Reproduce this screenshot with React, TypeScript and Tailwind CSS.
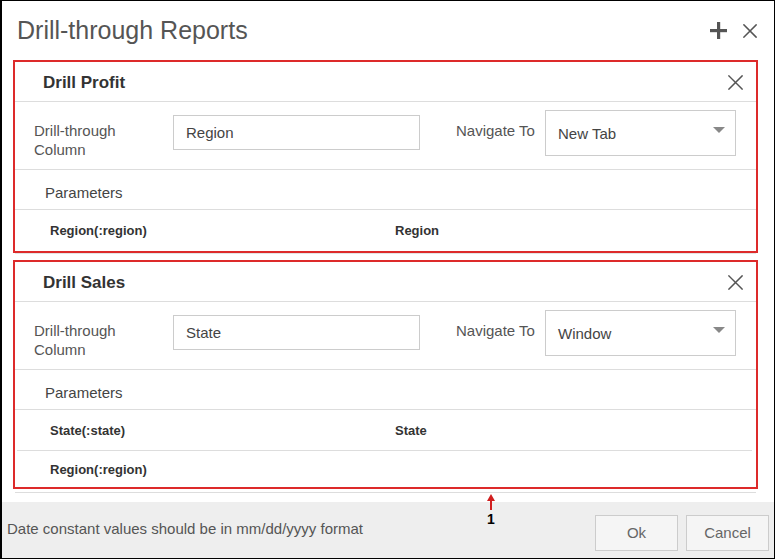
import React from 'react';

interface Param {
  name: string;
  value: string;
}

interface DrillSection {
  title: string;
  column: string;
  navigate: string;
  params: Param[];
}

const sections: DrillSection[] = [
  {
    title: 'Drill Profit',
    column: 'Region',
    navigate: 'New Tab',
    params: [{ name: 'Region(:region)', value: 'Region' }],
  },
  {
    title: 'Drill Sales',
    column: 'State',
    navigate: 'Window',
    params: [
      { name: 'State(:state)', value: 'State' },
      { name: 'Region(:region)', value: '' },
    ],
  },
];

function CloseIcon({ size = 15, stroke = 1.6 }: { size?: number; stroke?: number }) {
  return (
    <svg width={size} height={size} viewBox="0 0 16 16" fill="none">
      <path d="M1 1L15 15M15 1L1 15" stroke="#555" strokeWidth={stroke} strokeLinecap="square" />
    </svg>
  );
}

function PlusIcon() {
  return (
    <svg width="17" height="17" viewBox="0 0 17 17">
      <rect x="7" y="0" width="3.2" height="17" fill="#555" />
      <rect x="0" y="7" width="17" height="3.2" fill="#555" />
    </svg>
  );
}

function Section({ section, lastRowHeight }: { section: DrillSection; lastRowHeight: string }) {
  return (
    <div className="border-2 border-[#dd2a2a]">
      {/* header */}
      <div className="flex h-[40px] items-center justify-between border-b border-[#dddddd] pl-[28px] pr-[13px] pt-[2px]">
        <span className="text-[17px] font-bold text-[#333]">{section.title}</span>
        <CloseIcon />
      </div>

      {/* column + navigate */}
      <div className="flex h-[68px] border-b border-[#dddddd] pl-[19px] pt-[8px]">
        <div className="w-[139px] pt-[11px] text-[15px] leading-[19px] text-[#555]">
          Drill-through
          <br />
          Column
        </div>
        <div className="mt-[5px] flex h-[35px] w-[247px] items-center border border-[#cccccc] pl-[12px] text-[15px] text-[#444]">
          {section.column}
        </div>
        <div className="ml-[36px] w-[89px] pt-[11px] text-[15px] leading-[19px] text-[#555]">Navigate To</div>
        <div className="flex h-[46px] w-[191px] items-center justify-between border border-[#cccccc] pl-[12px] pr-[10px] text-[15px] text-[#444]">
          <span className="mt-[1px]">{section.navigate}</span>
          <svg width="12" height="6" viewBox="0 0 12 6" className="-mt-[7px]">
            <path d="M0 0H12L6 6Z" fill="#888" />
          </svg>
        </div>
      </div>

      {/* parameters */}
      <div className="h-[40px] border-b border-[#dddddd] pl-[30px] pt-[13px] text-[15px] leading-[19px] text-[#444]">
        Parameters
      </div>
      {section.params.map((p, i) => {
        const last = i === section.params.length - 1;
        return (
          <div
            key={p.name}
            className={`ml-[2px] mr-[4px] flex items-center pl-[33px] text-[13px] font-semibold text-[#333] ${
              i > 0 ? 'border-t border-[#dddddd]' : ''
            } ${last ? lastRowHeight : 'h-[40px]'}`}
          >
            <span className="w-[345px]">{p.name}</span>
            <span>{p.value}</span>
          </div>
        );
      })}
    </div>
  );
}

export default function App() {
  return (
    <div className="h-[559px] w-[776px] bg-white font-['Liberation_Sans',Arial,sans-serif]">
      <div className="relative flex h-[559px] w-[775px] flex-col border border-l-2 border-black">
        {/* title bar */}
        <div className="flex h-[60px] items-center justify-between pl-[15px] pr-[17px]">
          <h1 className="text-[25px] font-normal text-[#555]">Drill-through Reports</h1>
          <div className="flex items-center gap-[16px]">
            <PlusIcon />
            <CloseIcon size={14} stroke={1.7} />
          </div>
        </div>

        {/* body */}
        <div className="flex flex-1 flex-col pl-[11px] pr-[16px]">
          <Section section={sections[0]} lastRowHeight="h-[41px]" />
          <div className="mx-[2px] h-[7px] border-t border-[#e4e4e4]" />
          <Section section={sections[1]} lastRowHeight="h-[37px]" />
          <div className="mx-[2px] h-[4px] border-b border-[#dddddd]" />
          <div className="h-[9px]" />
        </div>

        {/* footer */}
        <div className="flex h-[56px] items-start justify-between bg-[#eeeeee] pl-[5px] pr-[5px]">
          <span className="mt-[16px] text-[15px] text-[#555]">Date constant values should be in mm/dd/yyyy format</span>
          <div className="mt-[13px] flex gap-[8px]">
            <button className="h-[36px] w-[83px] border border-[#cccccc] bg-[#f5f5f5] text-[15px] text-[#666]">Ok</button>
            <button className="h-[36px] w-[83px] border border-[#cccccc] bg-[#f5f5f5] text-[15px] text-[#666]">Cancel</button>
          </div>
        </div>

        {/* annotation marker */}
        <div className="absolute left-[481px] top-[493px] flex w-[16px] flex-col items-center">
          <svg width="8" height="16" viewBox="0 0 8 16">
            <path d="M4 0L8 7H5V16H3V7H0Z" fill="#d11f1f" />
          </svg>
          <span className="text-[14px] font-bold leading-[18px] text-black">1</span>
        </div>
      </div>
    </div>
  );
}
